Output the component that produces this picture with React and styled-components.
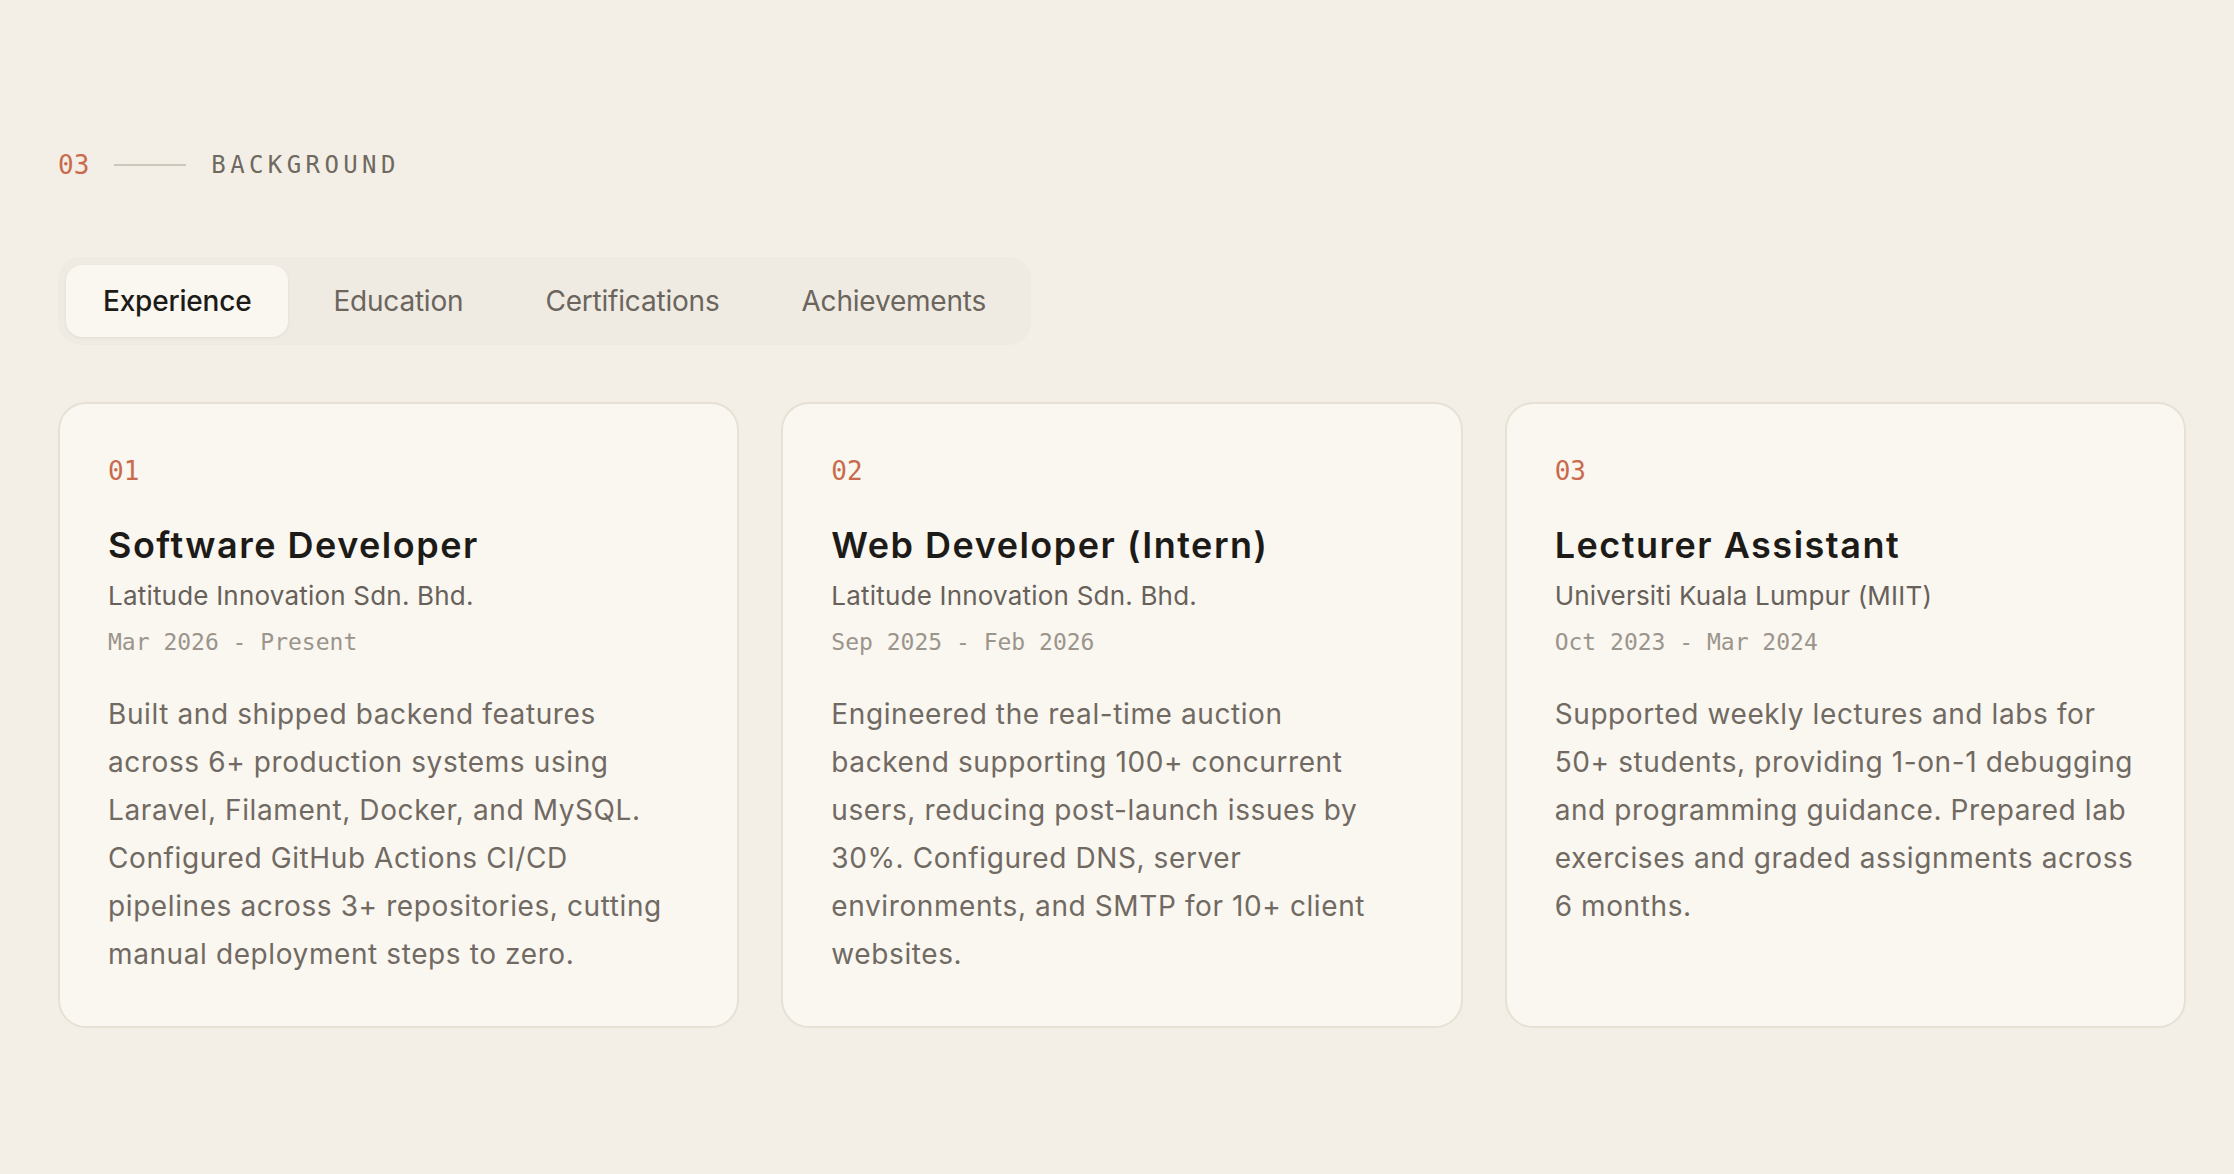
import React, { useState } from "react";
import styled, { createGlobalStyle } from "styled-components";

const GlobalStyle = createGlobalStyle`
  html, body {
    margin: 0;
    padding: 0;
    background: #f3efe6;
  }
  body {
    font-family: Inter, "Noto Sans", sans-serif;
    -webkit-font-smoothing: antialiased;
  }
`;

const mono = `"DejaVu Sans Mono", "Liberation Mono", monospace`;

const Section = styled.section`
  min-height: 1174px;
  box-sizing: border-box;
  padding: 150px 48px 0 58px;
`;

const Eyebrow = styled.div`
  display: flex;
  align-items: center;
  gap: 25px;
  height: 30px;
`;

const EyebrowNum = styled.span`
  font-family: ${mono};
  font-size: 26px;
  line-height: 30px;
  color: #c96a4c;
`;

const EyebrowLine = styled.span`
  width: 72px;
  height: 1.5px;
  background: #cdc6bb;
`;

const EyebrowLabel = styled.span`
  font-family: ${mono};
  font-size: 24px;
  line-height: 30px;
  letter-spacing: 4.4px;
  color: #6f6960;
`;

const TabBar = styled.div`
  display: inline-flex;
  gap: 8px;
  padding: 8px;
  margin-top: 77px;
  background: #efebe3;
  border-radius: 22px;
`;

const Tab = styled.button`
  border: 0;
  height: 72px;
  padding: 0 37px;
  border-radius: 16px;
  font-family: Inter, "Noto Sans", sans-serif;
  font-size: 28px;
  font-weight: ${(p) => (p.$active ? 500 : 400)};
  letter-spacing: -0.2px;
  color: ${(p) => (p.$active ? "#1d1b18" : "#6b655d")};
  background: ${(p) => (p.$active ? "#faf6f0" : "transparent")};
  box-shadow: ${(p) =>
    p.$active ? "0 1px 3px rgba(60, 50, 30, 0.08)" : "none"};
  cursor: pointer;
`;

const Grid = styled.div`
  display: grid;
  grid-template-columns: repeat(3, 1fr);
  gap: 42px;
  margin-top: 57px;
`;

const Card = styled.article`
  background: #faf6f0;
  border: 2px solid #e6e0d5;
  border-radius: 28px;
  padding: 52px 48px 48px 48px;
  display: flex;
  flex-direction: column;
`;

const Num = styled.div`
  font-family: ${mono};
  font-size: 26px;
  line-height: 30px;
  color: #c96a4c;
`;

const Title = styled.h3`
  margin: 38px 0 0;
  font-size: 36px;
  line-height: 43px;
  font-weight: 600;
  letter-spacing: 1.5px;
  color: #1d1b18;
`;

const Company = styled.div`
  margin-top: 11px;
  font-size: 26px;
  line-height: 36px;
  font-weight: 400;
  letter-spacing: 0.2px;
  color: #67615a;
`;

const Dates = styled.div`
  margin-top: 12px;
  font-family: ${mono};
  font-size: 23px;
  line-height: 32px;
  color: #9b958c;
`;

const Body = styled.p`
  margin: 32px 0 0;
  font-size: 28px;
  line-height: 48px;
  letter-spacing: 0.6px;
  color: #706a62;
`;

const tabs = ["Experience", "Education", "Certifications", "Achievements"];

const jobs = [
  {
    n: "01",
    title: "Software Developer",
    company: "Latitude Innovation Sdn. Bhd.",
    dates: "Mar 2026 - Present",
    text:
      "Built and shipped backend features across 6+ production systems using Laravel, Filament, Docker, and MySQL. Configured GitHub Actions CI/CD pipelines across 3+ repositories, cutting manual deployment steps to zero.",
  },
  {
    n: "02",
    title: "Web Developer (Intern)",
    company: "Latitude Innovation Sdn. Bhd.",
    dates: "Sep 2025 - Feb 2026",
    text:
      "Engineered the real-time auction backend\u00a0supporting 100+ concurrent users, reducing post-launch issues by 30%. Configured DNS, server environments, and SMTP for 10+ client websites.",
  },
  {
    n: "03",
    title: "Lecturer Assistant",
    company: "Universiti Kuala Lumpur (MIIT)",
    dates: "Oct 2023 - Mar 2024",
    text:
      "Supported weekly lectures and labs for 50+ students, providing 1-on-1 debugging and programming guidance. Prepared lab exercises and graded assignments across 6 months.",
  },
];

export default function App() {
  const [active, setActive] = useState("Experience");

  return (
    <>
      <GlobalStyle />
      <Section>
        <Eyebrow>
          <EyebrowNum>03</EyebrowNum>
          <EyebrowLine />
          <EyebrowLabel>BACKGROUND</EyebrowLabel>
        </Eyebrow>

        <TabBar>
          {tabs.map((t) => (
            <Tab key={t} $active={t === active} onClick={() => setActive(t)}>
              {t}
            </Tab>
          ))}
        </TabBar>

        <Grid>
          {jobs.map((j) => (
            <Card key={j.n}>
              <Num>{j.n}</Num>
              <Title>{j.title}</Title>
              <Company>{j.company}</Company>
              <Dates>{j.dates}</Dates>
              <Body>{j.text}</Body>
            </Card>
          ))}
        </Grid>
      </Section>
    </>
  );
}
